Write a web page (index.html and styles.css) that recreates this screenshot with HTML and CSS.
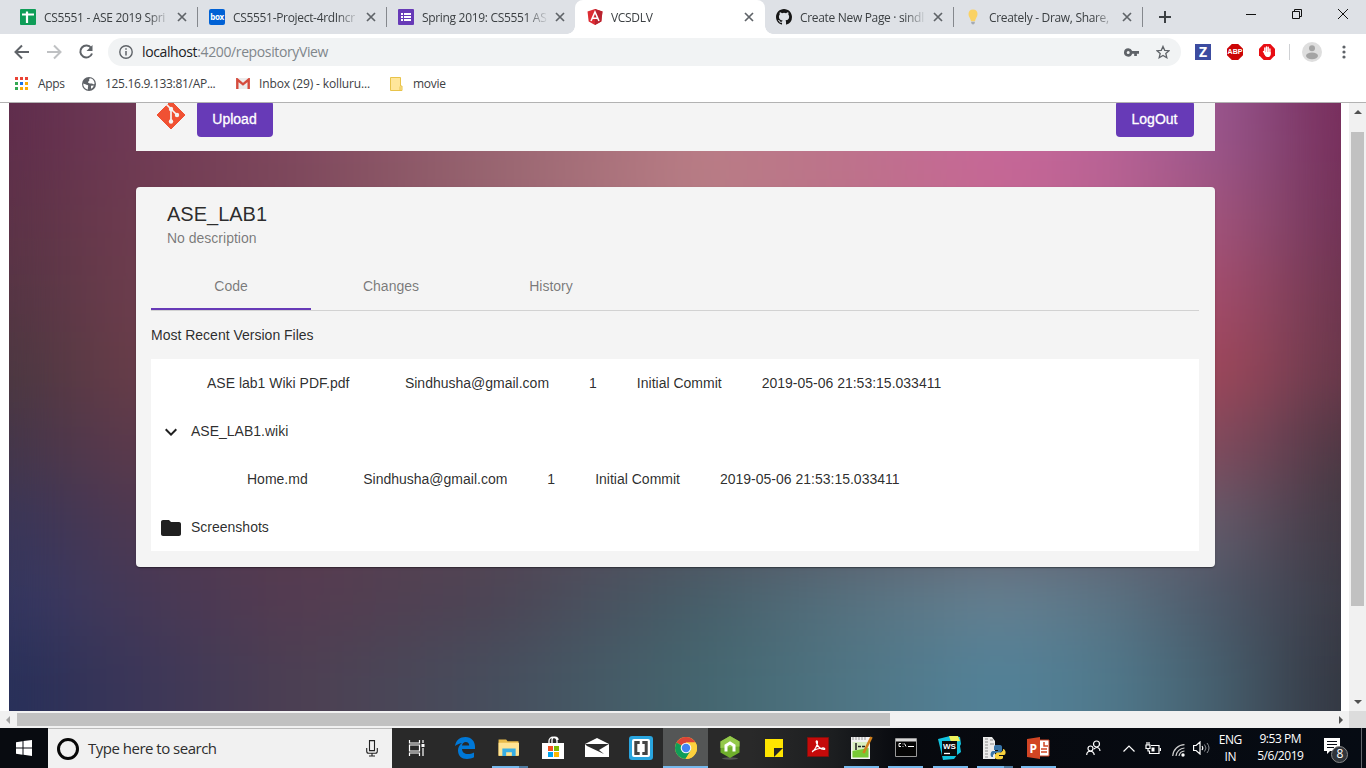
FILE: index.html
```html
<!DOCTYPE html>
<html lang="en">
<head>
<meta charset="utf-8">
<title>VCSDLV</title>
<link rel="stylesheet" href="styles.css">
</head>
<body>
<div class="screen">
  <div class="tabstrip">
    <div class="tab"><svg class="fav" viewBox="0 0 16 16"><rect width="16" height="16" rx="1" fill="#0f9d58"/><path d="M2 5.500h12M7 2.500v11.500" stroke="#fff" stroke-width="2.200"/></svg><span class="tab-title">CS5551 - ASE 2019 Spri</span><svg class="x" viewBox="0 0 10 10"><path d="M1 1l8 8M9 1l-8 8"/></svg></div>
    <div class="tab"><span class="fav boxfav">box</span><span class="tab-title">CS5551-Project-4rdIncr</span><svg class="x" viewBox="0 0 10 10"><path d="M1 1l8 8M9 1l-8 8"/></svg></div>
    <div class="tab nosep"><svg class="fav" viewBox="0 0 16 16"><rect width="16" height="16" rx="1" fill="#673ab7"/><path d="M3 5h2M3 8h2M3 11h2M6 5h7M6 8h7M6 11h7" stroke="#fff" stroke-width="1.800"/></svg><span class="tab-title">Spring 2019: CS5551 AS</span><svg class="x" viewBox="0 0 10 10"><path d="M1 1l8 8M9 1l-8 8"/></svg></div>
    <div class="tab active"><svg class="fav" viewBox="0 0 16 16"><path d="M8 0l7.500 2.600-1.200 10L8 16l-6.300-3.400-1.200-10z" fill="#dd2c33"/><path d="M8 0l7.500 2.600-1.200 10L8 16z" fill="#b8232f"/><path d="M4 12L8 3l4 9M5.500 9.300h5" stroke="#fff" stroke-width="1.600" fill="none"/></svg><span class="tab-title">VCSDLV</span><svg class="x" viewBox="0 0 10 10"><path d="M1 1l8 8M9 1l-8 8"/></svg></div>
    <div class="tab"><svg class="fav" viewBox="0 0 16 16"><path fill="#161616" d="M8 0C3.580 0 0 3.580 0 8c0 3.540 2.290 6.530 5.470 7.590.4.070.55-.17.55-.38v-1.490c-2.010.37-2.530-.49-2.690-.94-.09-.23-.48-.94-.82-1.130-.28-.15-.68-.52-.01-.53.63-.01 1.080.58 1.230.82.72 1.210 1.870.87 2.330.66.070-.52.28-.87.51-1.070-1.780-.2-3.640-.89-3.640-3.950 0-.87.31-1.590.82-2.150-.08-.2-.36-1.020.08-2.120 0 0 .67-.21 2.200.82a7.600 7.600 0 014 0c1.530-1.040 2.200-.82 2.200-.82.44 1.100.16 1.920.08 2.120.51.56.82 1.270.82 2.150 0 3.070-1.870 3.750-3.650 3.950.29.25.54.73.54 1.480v2.200c0 .21.15.46.55.38A8 8 0 0016 8c0-4.420-3.580-8-8-8z"/></svg><span class="tab-title">Create New Page · sindl</span><svg class="x" viewBox="0 0 10 10"><path d="M1 1l8 8M9 1l-8 8"/></svg></div>
    <div class="tab"><svg class="fav" viewBox="0 0 16 16"><path d="M8 .5c-3 0-4.500 2.100-4.500 4.500 0 3 2 4 2.500 7.300h4C10.500 9 12.500 8 12.500 5 12.500 2.600 11 .5 8 .5z" fill="#fad264"/><path d="M6.200 12.800h3.600v1.400L8 15.700l-1.800-1.500z" fill="#a5abb5"/></svg><span class="tab-title">Creately - Draw, Share,</span><svg class="x" viewBox="0 0 10 10"><path d="M1 1l8 8M9 1l-8 8"/></svg></div>
    <svg class="plus" viewBox="0 0 12 12"><path d="M6 0v12M0 6h12" stroke="#3c4043" stroke-width="2"/></svg>
    <div class="winctl">
      <svg viewBox="0 0 10 10"><path d="M0 5.500h10"/></svg>
      <svg viewBox="0 0 10 10"><path d="M.5 2.500h7v7h-7zM2.500 2.500v-2h7v7h-2" /></svg>
      <svg viewBox="0 0 10 10"><path d="M0 0l10 10M10 0L0 10"/></svg>
    </div>
  </div>

  <div class="toolbar">
    <svg class="nav" viewBox="0 0 16 16"><path d="M15 8H2M8 1.500L1.500 8 8 14.500"/></svg>
    <svg class="nav dim" viewBox="0 0 16 16"><path d="M1 8h13M8 1.500L14.500 8 8 14.500"/></svg>
    <svg class="nav" viewBox="0 0 16 16"><path d="M13.200 4A6 6 0 1 0 14 9.500"/><path d="M14.500 1v6h-6z" fill="#5f6368" stroke="none"/></svg>
    <div class="omnibox">
      <svg class="info" viewBox="0 0 14 14"><circle cx="7" cy="7" r="6.200" fill="none" stroke="#5f6368" stroke-width="1.400"/><path d="M7 6v4.500M7 3.300v1.500" stroke="#5f6368" stroke-width="1.500"/></svg>
      <span class="url"><b>localhost</b>:4200/repositoryView</span>
      <svg class="key" viewBox="0 0 15 9"><path fill="#5f6368" fill-rule="evenodd" d="M4.200.3a4.200 4.200 0 1 0 4 5.500h2V8h2.700V5.800H15V2.900H8.200a4.200 4.200 0 0 0-4-2.600zM4.200 3a1.500 1.500 0 1 1 0 3 1.500 1.500 0 0 1 0-3z"/></svg>
      <svg class="star" viewBox="0 0 14 14"><path d="M7 1.400l1.700 3.900 4.300.4-3.200 2.800 1 4.200L7 10.500l-3.800 2.200 1-4.200L1 5.700l4.300-.4z" fill="none" stroke="#5f6368" stroke-width="1.300"/></svg>
    </div>
    <span class="ext ext-z">Z</span>
    <span class="ext ext-abp">ABP</span>
    <svg class="ext" viewBox="0 0 16 16"><path d="M4.700 0h6.600L16 4.700v6.600L11.300 16H4.700L0 11.300V4.700z" fill="#e80d13"/><path d="M5.800 4v5M7.500 3v6M9.200 3.300V9M10.900 5v5M4.500 7.500L7 11.500" stroke="#fff" stroke-width="1.400" stroke-linecap="round"/><path d="M5.200 8h6.400v2.500c0 1.500-1 2.600-2.600 2.600-1.700 0-2.700-1-3.400-2.600z" fill="#fff"/></svg>
    <i class="vsep"></i>
    <svg class="avatar" viewBox="0 0 20 20"><circle cx="10" cy="10" r="10" fill="#dedede"/><circle cx="10" cy="6.300" r="3" fill="#a4a4a4"/><ellipse cx="10" cy="13.800" rx="6" ry="3.400" fill="#a4a4a4"/></svg>
    <svg class="dots" viewBox="0 0 4 14"><g fill="#5f6368"><circle cx="2" cy="2" r="1.600"/><circle cx="2" cy="7" r="1.600"/><circle cx="2" cy="12" r="1.600"/></g></svg>
  </div>

  <div class="bookmarks">
    <svg class="apps" viewBox="0 0 13 13"><path d="M0 0h3v3H0zM5 0h3v3H5zM10 0h3v3h-3z" fill="#ea4335"/><path d="M0 5h3v3H0zM0 10h3v3H0z" fill="#34a853"/><path d="M5 5h3v3H5z" fill="#1a73e8"/><path d="M10 5h3v3h-3zM5 10h3v3H5zM10 10h3v3h-3z" fill="#fbab05"/></svg>
    <span class="bm bm1">Apps</span>
    <svg class="globe" viewBox="0 0 14 14"><circle cx="7" cy="7" r="7" fill="#5f6368"/><path d="M8 1.300C6 2.500 8.500 3.500 6.500 4.500 5 5 7 7 9.500 6.500c1.500-.3 2 1.500 3 .5C12.800 4 10.500 1.500 8 1.300zM1.300 6.500C3 7 4 7.500 5.500 8c1.500.8 0 2 .5 4.500C3 12 1 9.500 1.300 6.500zM9 8.800l2.800-.3c-.4 1.500-1.300 2.600-2.800 3.300z" fill="#fff"/></svg>
    <span class="bm bm2">125.16.9.133:81/AP...</span>
    <svg class="gmail" viewBox="0 0 14 11"><path d="M0 0h14v11H0z" fill="#ececec"/><path d="M1.300 11V1.500L7 6.300l5.700-4.800V11" fill="none" stroke="#d54b3d" stroke-width="2.400"/></svg>
    <span class="bm bm3">Inbox (29) - kolluru...</span>
    <svg class="folder-bm" viewBox="0 0 13 14"><path d="M.5.5h10v8.500h1.500v4.500H.5z" fill="#ffe69a" stroke="#e8c34a"/><path d="M10 9.500v4" stroke="#e8c34a"/></svg>
    <span class="bm bm4">movie</span>
  </div>

  <div class="middle">
    <div class="page">
      <div class="backdrop"></div>
      <div class="edges"></div>
      <div class="flow">
        <div class="topbar">
          <svg class="git" viewBox="0 0 30 30"><path d="M15 1l14 14-14 14L1 15z" fill="#f05133" stroke="#f05133" stroke-linejoin="round"/><path d="M9 3l6 6v12M15 9l6 6" stroke="#f4f4f4" stroke-width="1.700" fill="none"/><g fill="#f4f4f4"><circle cx="15" cy="9" r="2.200"/><circle cx="21" cy="15" r="2.200"/><circle cx="15" cy="21.500" r="2.200"/></g></svg>
          <span class="btn upload">Upload</span>
          <span class="btn logout">LogOut</span>
        </div>
        <div class="card">
          <div class="repo">ASE_LAB1</div>
          <div class="desc">No description</div>
          <div class="tabs"><span class="on">Code</span><span>Changes</span><span>History</span></div>
          <div class="recent">Most Recent Version Files</div>
          <div class="tree">
            <div class="row file"><span>ASE lab1 Wiki PDF.pdf</span><span>Sindhusha@gmail.com</span><span>1</span><span>Initial Commit</span><span>2019-05-06 21:53:15.033411</span></div>
            <div class="row dir"><svg viewBox="0 0 24 24"><path d="M7.410 8.590L12 13.170l4.590-4.580L18 10l-6 6-6-6z"/></svg>ASE_LAB1.wiki</div>
            <div class="row file nested"><span>Home.md</span><span>Sindhusha@gmail.com</span><span>1</span><span>Initial Commit</span><span>2019-05-06 21:53:15.033411</span></div>
            <div class="row dir"><svg viewBox="0 0 24 24"><path d="M10 4H4c-1.100 0-1.990.9-1.990 2L2 18c0 1.100.9 2 2 2h16c1.100 0 2-.9 2-2V8c0-1.100-.9-2-2-2h-8l-2-2z"/></svg>Screenshots</div>
          </div>
        </div>
      </div>
    </div>
    <div class="vbar"><i class="up"></i><i class="vthumb"></i><i class="down"></i></div>
  </div>
  <div class="hbar"><i class="left"></i><i class="hthumb"></i><i class="right"></i><i class="corner"></i></div>

  <div class="taskbar">
    <div class="start"><svg width="16" height="16" viewBox="0 0 16 16"><path d="M0 2.300L6.500 1.300v6.200H0zM7.500 1.100L16 0v7.500H7.500zM0 8.500h6.500v6.200L0 13.700zM7.500 8.500H16V16l-8.500-1.200z" fill="#fff"/></svg></div>
    <div class="search"><i class="ring"></i><span class="hint">Type here to search</span><svg class="mic" viewBox="0 0 12 17"><path d="M3.500.6h5v10h-5zM.7 8v3.200c0 1.200 1 2 2 2h6.600c1 0 2-.8 2-2V8M6 13v3M3 16h6" fill="none" stroke="#222" stroke-width="1.100"/></svg></div>
    <div class="cell tv"><svg width="18" height="16" viewBox="0 0 18 16"><path d="M1.500 0v3h10V0M1.500 16v-3h10v3M1.500 5h10v6h-10zM15 0v3M15 8v8" fill="none" stroke="#fff" stroke-width="1.200"/><path d="M13.500 4h3v3h-3z" fill="#fff"/></svg></div>
    <div class="cell"><svg width="22" height="24" viewBox="0 0 22 24"><path d="M1 10C2 4 6 1 11.500 1 17.500 1 21 5.500 21 10.500V13H8c0 3 2.500 5 6 5 2 0 4-.5 6-1.600v4.800c-2 1.200-4.500 1.700-7 1.700-5.500 0-9-3.500-9-8.500 0-3 1.500-5.700 4-7.400C5 7.500 3 8.500 1 10zM8 9.500h7.200C15.200 7.300 14 6 11.800 6 9.800 6 8.300 7.300 8 9.500z" fill="#0078d7"/></svg></div>
    <div class="cell run more"><svg class="lift" width="22" height="19" viewBox="0 0 22 20"><path d="M0 1.500h8l1.500 2H21V19H0z" fill="#e9bb4b"/><path d="M0 5h21.500v13.500H0z" fill="#ffe394"/><path d="M4 19v-8h14v8h-4v-4H8v4z" fill="#38aee4"/></svg></div>
    <div class="cell"><svg width="24" height="24" viewBox="0 0 24 24"><path d="M1 7h22v16H1z" fill="#fff"/><path d="M8 8V5c0-5 8-5 8 0v3M11 7V4c0-4 6-3.500 6 0" stroke="#fff" fill="none" stroke-width="1.300"/><path d="M7 10h5v5H7z" fill="#f25022"/><path d="M13 10h5v5h-5z" fill="#7fba00"/><path d="M7 16h5v5H7z" fill="#00a4ef"/><path d="M13 16h5v5h-5z" fill="#ffb900"/></svg></div>
    <div class="cell"><svg width="24" height="20" viewBox="0 0 24 20"><path d="M0 6L12 0l12 6v13H0z" fill="#fff"/><path d="M0 6h24l-10 6 5 4L2 8z" fill="#2b2b2b"/></svg></div>
    <div class="cell"><svg width="24" height="24" viewBox="0 0 24 24"><rect width="24" height="24" rx="3" fill="#29a5df"/><rect x="3" y="3" width="18" height="18" rx="2" fill="#fff"/><path d="M10.700 6.500H6.800v11h3.900M13.300 6.500h3.900v11h-3.900" stroke="#454545" stroke-width="3" fill="none"/></svg></div>
    <div class="cell run cur"><svg width="22" height="22" viewBox="0 0 22 22"><circle cx="11" cy="11" r="11" fill="#fdd13d"/><path d="M11 11L1.500 5.500A11 11 0 0 1 20.500 5.500H11z" fill="#dc4437"/><path d="M11 11L1.500 5.500A11 11 0 0 0 10.500 22L16 13.500z" fill="#109d58"/><path d="M11 5.500h9.500A11 11 0 0 1 10.500 22L16 13z" fill="#fdd13d"/><circle cx="11" cy="11" r="5.300" fill="#f5f5f5"/><circle cx="11" cy="11" r="4.200" fill="#4384f3"/></svg></div>
    <div class="cell"><svg width="20" height="24" viewBox="0 0 20 24"><ellipse cx="10" cy="22.500" rx="8" ry="1.200" fill="#555"/><path d="M10 0l9.500 5.500v11L10 22 .5 16.500v-11z" fill="#6fae2c"/><path d="M10 0l9.500 5.500v5L.5 12V5.500z" fill="#94c94b"/><path d="M6 15.500V9.500l4-2.500 4 2.500v6" stroke="#fff" stroke-width="3" fill="none"/></svg></div>
    <div class="cell"><svg width="18" height="18" viewBox="0 0 18 18"><path d="M0 0h18v18H0z" fill="#ffe500"/><path d="M9 9h9l-9 9z" fill="#252525"/></svg></div>
    <div class="cell"><svg class="lift" width="22" height="20" viewBox="0 0 22 20"><path d="M.5.5h21v19H.5z" fill="#c50a0a" stroke="#82100c"/><path d="M5 15c2-1 6-7 5.500-10C10 3 8.500 4 9.500 6c1 3 4 6 7.500 6.500 1.500 0 1-2-2-1.500-3 .2-7 1.500-9.500 3" fill="none" stroke="#fff" stroke-width="1.200"/></svg></div>
    <div class="cell run"><svg width="22" height="24" viewBox="0 0 22 24"><path d="M0 1h19v22H0z" fill="#f2f2f2"/><path d="M2 1v3M5 1v3M8 1v3M11 1v3M14 1v3" stroke="#999"/><path d="M1.500 6h16v15h-16z" fill="#d9efbf"/><path d="M1.500 15l16-3v9.500h-16z" fill="#78c936"/><path d="M5 7v7M7 10.500h3M11 10.500h3" stroke="#222" stroke-width="1.500"/><path d="M20.500 1l-8 16" stroke="#d2811d" stroke-width="2.600"/></svg></div>
    <div class="cell run"><svg class="lift" width="22" height="19" viewBox="0 0 22 19"><path d="M.5.5h21v18H.5z" fill="#050505" stroke="#999"/><path d="M1 1h20v2.500H1z" fill="#d6d6d6"/><path d="M6 5.500H4v3h2M8 5.500v.8M8 8v.8M9.500 5.500L11 8.500M13 8.500h6" stroke="#fff" fill="none"/></svg></div>
    <div class="cell run"><svg width="24" height="24" viewBox="0 0 24 24"><path d="M0 3L12 0l10 1 1 7-1 2 1 6-4 3-3 4-11 1z" fill="#12c4df"/><path d="M11 0h9l2 5-9 1z" fill="#eef35c"/><path d="M4 5h15v15H4z" fill="#0a0a0a"/><path d="M6 17.500h6" stroke="#fff" stroke-width="1.300"/><text x="5" y="13" class="wstxt">WS</text></svg></div>
    <div class="cell run more"><svg width="24" height="24" viewBox="0 0 24 24"><path d="M1 1h9l3 4v18H1z" fill="#ececec"/><path d="M3 3h3M3 6h3M3 9h3M3 12h3M3 15h3M3 18h3M3 21h3M8 4h3M8 8h4" stroke="#8c8c8c"/><path d="M14 9h4c1.500 0 2 1 2 2v4l-2 2h-5l-2 2v2h-1c-2 0-2-6 1-6h5v-1h-4v-3c0-1.500 1-2 2-2z" fill="#3773a6"/><path d="M21 13c3 0 3.500 6 1 6h-5v1h4v2c0 1.800-8 1.800-8 0v-3.500l2-2h4l2-2z" fill="#f9d23e"/></svg></div>
    <div class="cell run"><svg width="24" height="22" viewBox="0 0 24 22"><path d="M13 3h10v16H13z" fill="#fff" stroke="#d14524"/><path d="M15 12h6M15 15h6M18 5v4h4" stroke="#d14524" stroke-width="1.500" fill="none"/><path d="M1 2L14 0v22L1 20z" fill="#d14524"/><text x="3.500" y="15.500" class="pptxt">P</text></svg></div>
    <div class="tray">
      <svg width="15" height="16" viewBox="0 0 15 16"><g fill="none" stroke="#fff" stroke-width="1.200"><circle cx="10.500" cy="4" r="3"/><circle cx="4.500" cy="8.500" r="2.500"/><path d="M.7 15c0-5 7.500-5 7.500 0M8 9c3-3 6-1 6 2"/></g></svg>
      <svg class="chev" width="12" height="7" viewBox="0 0 12 7"><path d="M.5 6.500L6 1l5.500 5.500" fill="none" stroke="#fff" stroke-width="1.200"/></svg>
      <svg class="batt" width="16" height="13" viewBox="0 0 16 13"><path d="M6 3.500h8v8H4.500V9M15.500 6v3M1 3h4v3.500H1zM2 3V0M4 3V0M3 6v3h2" fill="none" stroke="#fff" stroke-width="1.200"/><path d="M6.500 5.500h3v4h-3z" fill="#fff"/></svg>
      <svg class="wifi" width="13" height="13" viewBox="0 0 13 13"><g fill="none" stroke="#ccc" stroke-width="1.200"><path d="M.7 12A12 12 0 0 1 12.500.7M4 12a9 9 0 0 1 8.500-8M7 12a6 6 0 0 1 5.500-5"/></g><circle cx="11" cy="11" r="1.700" fill="#fff"/></svg>
      <svg class="snd" width="17" height="14" viewBox="0 0 17 14"><path d="M.6 4.500h2.500L7 1v12L3.100 9.500H.6zM9 5q1.500 2 0 4" fill="none" stroke="#fff" stroke-width="1.200"/><path d="M11.500 3.500q3 3.500 0 7M14 2q4 5 0 10" fill="none" stroke="#8d9095"/></svg>
      <span class="lang">ENG<br>IN</span>
      <span class="clock">9:53 PM<br>5/6/2019</span>
      <span class="note"><svg width="17" height="17" viewBox="0 0 17 17"><path d="M0 0h16v13H6l-3 3v-3H0z" fill="#fff"/><path d="M3 3.500h10M3 6.500h10M3 9.500h7" stroke="#080c14"/></svg><b>8</b></span>
      <i class="peek"></i>
    </div>
  </div>
</div>
</body>
</html>
```
FILE: styles.css
```css
* { box-sizing: border-box; }
body { margin: 0; overflow: hidden; }
svg { display: block; flex: none; }
.screen { width: 1366px; height: 768px; display: flex; flex-direction: column; background: #fff; font: 12px "Open Sans", "Noto Sans", sans-serif; color: #3c4043; overflow: hidden; }

/* tab strip */
.tabstrip { height: 34px; flex: none; display: flex; align-items: center; background: #dee1e6; padding-left: 9px; }
.tab { width: 189px; height: 34px; flex: none; display: flex; align-items: center; padding-left: 11px; position: relative; }
.tab::after { content: ""; position: absolute; right: 0; top: 7px; width: 1px; height: 20px; background: #85888d; }
.tab.nosep::after, .tab.active::after { display: none; }
.tab.active { background: #fff; border-radius: 8px 8px 0 0; width: 190px; margin-left: -1px; padding-left: 12px; }
.tab.active::before { content: ""; position: absolute; left: -8px; right: -8px; bottom: 0; height: 8px; background: radial-gradient(circle at 0 0, transparent 7.5px, #fff 8px) left / 8px 8px no-repeat, radial-gradient(circle at 100% 0, transparent 7.5px, #fff 8px) right / 8px 8px no-repeat; }
.fav { width: 16px; height: 16px; flex: none; }
.boxfav { background: #0061d5; border-radius: 2px; color: #fff; font: bold 8px/15px "Open Sans", sans-serif; text-align: center; letter-spacing: -.3px; }
.tab-title { width: 130px; margin-left: 8px; white-space: nowrap; letter-spacing: -.32px; -webkit-mask-image: linear-gradient(90deg, #000 104px, transparent 127px); mask-image: linear-gradient(90deg, #000 104px, transparent 127px); }
.x { width: 10px; height: 10px; margin-left: 3px; fill: none; stroke: #5f6368; stroke-width: 1.7; }
.plus { width: 12px; height: 12px; margin-left: 16px; }
.winctl { display: flex; gap: 36px; margin-left: auto; padding: 0 18px 6px 0; }
.winctl svg { width: 10px; height: 10px; fill: none; stroke: #111; overflow: visible; }

/* toolbar */
.toolbar { height: 36px; flex: none; display: flex; align-items: center; padding-left: 14px; }
.nav { width: 16px; height: 16px; margin-right: 16px; fill: none; stroke: #5f6368; stroke-width: 2; }
.nav.dim { stroke: #bfc1c3; }
.omnibox { width: 1073px; height: 28px; margin-left: -2px; border-radius: 14px; background: #f1f3f4; display: flex; align-items: center; padding: 0 11px; flex: none; }
.info { width: 14px; height: 14px; }
.url { margin-left: 9px; padding-bottom: 2px; font-size: 14px; letter-spacing: -.38px; color: #80868b; white-space: nowrap; }
.url b { font-weight: 400; color: #202124; }
.key { width: 15px; height: 9px; margin-left: auto; }
.star { width: 14px; height: 14px; margin-left: 17px; }
.ext { width: 16px; height: 16px; flex: none; margin-left: 16px; }
.ext-z { margin-left: 14px; background: #3c4ca0; color: #fff; font: bold 14px/16px "Open Sans", sans-serif; text-align: center; }
.ext-abp { background: #cc0505; color: #fff; clip-path: polygon(30% 0, 70% 0, 100% 30%, 100% 70%, 70% 100%, 30% 100%, 0 70%, 0 30%); font: bold 7px/16px "Liberation Sans", sans-serif; text-align: center; }
.vsep { width: 1px; height: 16px; background: #cfd1d4; margin: 0 12px 0 14px; }
.avatar { width: 20px; height: 20px; }
.dots { width: 4px; height: 14px; margin-left: 20px; }

/* bookmarks */
.bookmarks { height: 33px; flex: none; display: flex; align-items: center; padding: 0 0 5px 15px; border-bottom: 1px solid #b2b2b2; }
.bm { white-space: nowrap; letter-spacing: -.3px; }
.apps { width: 13px; height: 13px; }
.bm1 { width: 28px; margin: 0 16px 0 10px; }
.globe { width: 14px; height: 14px; }
.bm2 { width: 110px; margin: 0 21px 0 9px; }
.gmail { width: 14px; height: 11px; }
.bm3 { width: 111px; margin: 0 20px 0 9px; letter-spacing: -.14px; }
.folder-bm { width: 13px; height: 14px; }
.bm4 { margin-left: 10px; letter-spacing: -.3px; }

/* web page */
.middle { flex: 1; display: flex; min-height: 0; }
.page {
  width: 1349px; position: relative; overflow: hidden;
  background:
    linear-gradient(#5f2b4d, #5a3246 25%, #49373f 45%, #383558 72%, #26305a) left / 50% 100% no-repeat,
    linear-gradient(#762a59, #6f2f52 20%, #653547 45%, #423840 62%, #32353f) right / 50% 100% no-repeat;
}
.backdrop {
  position: absolute; left: 0; right: 0; top: -76px; bottom: -76px; filter: blur(30px);
  background:
    linear-gradient(90deg, #5f2b4d, #703957 10%, #844e66 22%, #985a72 37%, #b07086 52%, #be6f92 63%, #c56a9b 74%, #b7639b 82%, #985894 90%, #863f74 95%, #742858) 0 0 / 100% 77px no-repeat,
    linear-gradient(90deg, #5e2d4a, #6f3954 10%, #7f485d 22%, #9a6672 37%, #ba7e86 52%, #be728c 63%, #c86899 74%, #ba6396 82%, #9a568c 90%, #854472 95%, #742b58) 0 76px / 100% 77px no-repeat,
    linear-gradient(90deg, #5a3246, #6e3b4f 10%, #7d485b 22%, #986570 37%, #b67c84 52%, #bb7188 63%, #c46591 74%, #b86291 82%, #a2547c 90%, #86456b 95%, #6d2f54) 0 152px / 100% 77px no-repeat,
    linear-gradient(90deg, #523543, #6c3c4c 10%, #7d485b 22%, #955d66 50%, #b05d78 74%, #a54c6c 90%, #87435e 95%, #69344c) 0 228px / 100% 77px no-repeat,
    linear-gradient(90deg, #493740, #683c48 10%, #704550 22%, #80505a 50%, #a35067 74%, #a04659 90%, #844256 95%, #613648) 0 304px / 100% 77px no-repeat,
    linear-gradient(90deg, #42364a, #5c394b 10%, #60404d 22%, #6c4d5a 50%, #904e62 74%, #834b5e 90%, #684152 95%, #493640) 0 380px / 100% 77px no-repeat,
    linear-gradient(90deg, #36365a, #4e3850 10%, #583c4e 22%, #55505d 50%, #66606d 74%, #655c6c 90%, #524654 95%, #3e3843) 0 456px / 100% 77px no-repeat,
    linear-gradient(90deg, #323764, #453856 10%, #553b50 22%, #4c4454 37%, #465e69 52%, #56717f 63%, #658091 74%, #5b7484 82%, #4d5868 90%, #454856 95%, #393a46) 0 532px / 100% 77px no-repeat,
    linear-gradient(90deg, #262f59, #3b3658 10%, #4d3f52 22%, #464e5d 37%, #44666f 52%, #4f7584 63%, #538299 74%, #50798c 82%, #46606f 90%, #3d4855 95%, #323540) 0 608px / 100% 152px no-repeat;
}
.edges { position: absolute; left: 9px; right: 8px; top: -20px; bottom: -20px; box-shadow: 0 0 3px 14px #fff; }
.flow { position: relative; padding: 0 134.5px 0 135.5px; font: 14px/20px "Liberation Sans", Arial, sans-serif; color: rgba(0,0,0,.84); }
.topbar { height: 48px; background: #f4f4f4; display: flex; align-items: flex-start; padding: 0 21px 0 20.5px; overflow: hidden; }
.git { width: 30px; height: 30px; margin-top: -3px; }
.btn { height: 36px; margin-top: -2px; background: #673ab7; color: #fff; border-radius: 4px; line-height: 36px; text-align: center; }
.upload { width: 76px; margin-left: 10.5px; -webkit-text-stroke: .3px #fff; }
.logout { width: 78px; margin-left: auto; -webkit-text-stroke: .3px #fff; }
.card { height: 380px; margin-top: 36px; background: #f4f4f4; border-radius: 4px; padding: 15px 16px 16px 15.5px; box-shadow: 0 2px 1px -1px rgba(0,0,0,.2), 0 1px 1px rgba(0,0,0,.14), 0 1px 3px rgba(0,0,0,.12); }
.repo { padding-left: 16px; font-size: 20px; line-height: 24px; }
.desc { padding-left: 16px; margin-top: 2px; color: rgba(0,0,0,.52); }
.tabs { display: flex; height: 49px; margin-top: 14px; border-bottom: 1px solid #d2d2d2; }
.tabs span { width: 160px; height: 48px; line-height: 48px; text-align: center; color: rgba(0,0,0,.52); }
.tabs .on { border-bottom: 2px solid #673ab7; }
.recent { margin-top: 14px; }
.tree { margin-top: 14px; background: #fff; }
.row { height: 48px; display: flex; align-items: center; white-space: nowrap; }
.file { padding-left: 56px; gap: 40px; }
.file span:first-child { margin-right: 15.5px; }
.nested { padding-left: 96px; }
.dir svg { width: 24px; height: 24px; margin: 2px 8px 0; fill: #202020; }

/* scrollbars */
.vbar { width: 17px; background: #f1f1f1; display: flex; flex-direction: column; align-items: center; }
.up, .down { width: 0; height: 0; border: 4px solid transparent; }
.up { border-bottom-color: #505050; margin-top: 3px; }
.down { border-top-color: #505050; margin: auto 0 3px; }
.vthumb { width: 13px; height: 474px; margin-top: 18px; background: #c1c1c1; }
.hbar { height: 17px; flex: none; background: #f1f1f1; display: flex; align-items: center; }
.left, .right { width: 0; height: 0; border: 4px solid transparent; }
.left { border-right-color: #a3a3a3; margin-left: 2px; }
.hthumb { width: 873px; height: 13px; margin-left: 7px; background: #c1c1c1; }
.right { border-left-color: #505050; margin: 0 2px 0 auto; }
.corner { width: 17px; height: 17px; background: #dcdcdc; }

/* taskbar */
.taskbar { height: 40px; flex: none; display: flex; background: linear-gradient(90deg, #292929 55%, #1c1e20 61%, #07090e 66%, #060b13); color: #fff; }
.start { width: 48px; flex: none; background: #080b10; display: grid; place-items: center; }
.search { width: 344px; flex: none; display: flex; align-items: center; background: #f1f1f1; border-top: 1px solid #bbb; padding: 0 14px 0 9px; color: #2e2e2e; font-size: 15px; letter-spacing: -.5px; }
.hint { padding-bottom: 2px; }
.ring { width: 22px; height: 22px; border: 3px solid #080808; border-radius: 50%; margin-right: 9px; }
.mic { width: 12px; height: 17px; margin-left: auto; }
.cell { width: 44.1px; flex: none; display: grid; place-items: center; position: relative; }
.tv { width: 51px; padding-right: 2px; }
.run::after { content: ""; position: absolute; left: 4.5px; bottom: 0; width: 35px; height: 2px; background: #76b9ed; }
.more::after { background: linear-gradient(90deg, #76b9ed 27px, #4e7ba0 27px); width: 36px; }
.cur { background: #545656; }
.cur::after { left: 0; width: 100%; }
.lift { margin-bottom: 2px; }
.wstxt { font: bold 8px "Liberation Sans", sans-serif; fill: #fff; }
.pptxt { font: bold 12px "Open Sans", sans-serif; fill: #fff; }
.tray { flex: 1; display: flex; align-items: center; padding-left: 26px; font-size: 12px; line-height: 17px; text-align: center; letter-spacing: -.45px; }
.chev { margin-left: 22px; }
.batt { margin-left: 10px; }
.wifi { margin-left: 11px; margin-top: 4px; }
.snd { margin-left: 8px; }
.lang { width: 30px; margin-left: 5px; padding-bottom: 1px; }
.clock { width: 56px; margin-left: 7px; padding-bottom: 2px; }
.note { width: 26px; height: 26px; margin-left: 16px; position: relative; padding-top: 3px; }
.note b { position: absolute; left: 7px; top: 11px; width: 17px; height: 17px; border: 1px solid #888; border-radius: 50%; background: #30343a; font: 12px/14px "Open Sans", sans-serif; }
.peek { width: 1px; height: 40px; background: #62666c; margin: 0 4px 0 auto; }
```
